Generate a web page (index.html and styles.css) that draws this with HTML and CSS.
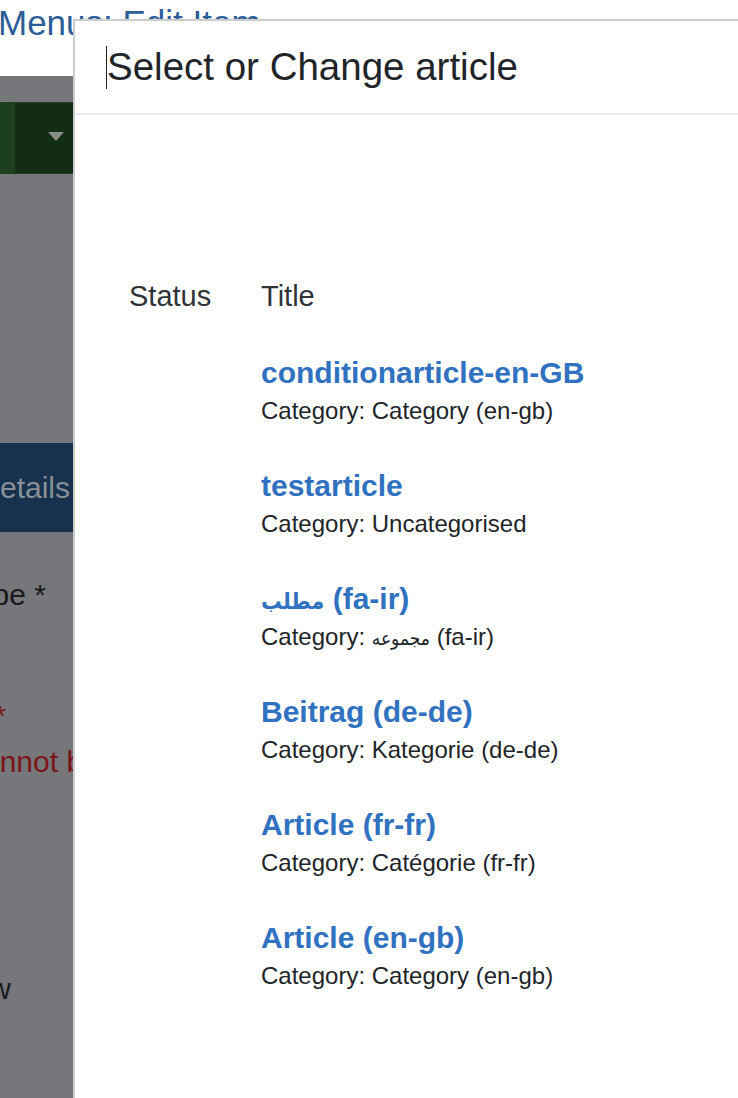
FILE: index.html
```html
<!DOCTYPE html>
<html lang="en">
<head>
<meta charset="utf-8">
<title>Menus: Edit Item</title>
<link rel="stylesheet" href="styles.css">
</head>
<body>
<div class="page">
  <header class="topbar">
    <h1 class="page-title">Menus: Edit Item</h1>
  </header>
  <main class="backdrop">
    <div class="toolbar">
      <div class="toolbar-drop"><span class="caret"></span></div>
    </div>
    <div class="tabbar">
      <div class="tab-wrap"><span class="tab-label">Details</span></div>
    </div>
    <div class="field-line type-label"><span>Menu Item Type *</span></div>
    <div class="field-line req-mark"><span>Title *</span></div>
    <div class="field-line error-text">cannot be empty</div>
    <div class="field-line show-label"><span>Show</span></div>
  </main>
</div>

<div class="modal">
  <div class="modal-header">
    <h3 class="modal-title"><span class="text-caret"></span>Select or Change article</h3>
  </div>
  <div class="modal-body">
    <div class="list-head">
      <div class="col-status">Status</div>
      <div class="col-title">Title</div>
    </div>
    <div class="list-items">
      <div class="item">
        <div class="col-status"></div>
        <div class="col-title">
          <a class="item-title">conditionarticle-en-GB</a>
          <div class="item-cat">Category: Category (en-gb)</div>
        </div>
      </div>
      <div class="item">
        <div class="col-status"></div>
        <div class="col-title">
          <a class="item-title">testarticle</a>
          <div class="item-cat">Category: Uncategorised</div>
        </div>
      </div>
      <div class="item">
        <div class="col-status"></div>
        <div class="col-title">
          <a class="item-title"><span class="ar ar-title">مطلب</span> (fa-ir)</a>
          <div class="item-cat">Category: <span class="ar ar-cat">مجموعه</span> (fa-ir)</div>
        </div>
      </div>
      <div class="item">
        <div class="col-status"></div>
        <div class="col-title">
          <a class="item-title">Beitrag (de-de)</a>
          <div class="item-cat">Category: Kategorie (de-de)</div>
        </div>
      </div>
      <div class="item">
        <div class="col-status"></div>
        <div class="col-title">
          <a class="item-title">Article (fr-fr)</a>
          <div class="item-cat">Category: Catégorie (fr-fr)</div>
        </div>
      </div>
      <div class="item">
        <div class="col-status"></div>
        <div class="col-title">
          <a class="item-title">Article (en-gb)</a>
          <div class="item-cat">Category: Category (en-gb)</div>
        </div>
      </div>
    </div>
  </div>
</div>
</body>
</html>
```

FILE: styles.css
```css
html, body {
  margin: 0;
  padding: 0;
  height: 100%;
  overflow: hidden;
}

body {
  font-family: "Liberation Sans", "DejaVu Sans", Arial, sans-serif;
  background: #76777b;
  position: relative;
}

.page {
  display: flex;
  flex-direction: column;
  height: 1098px;
}

.topbar {
  height: 76px;
  background: #ffffff;
  padding-top: 3px;
  box-sizing: border-box;
}

.page-title {
  margin: 0 0 0 -2px;
  font-size: 35px;
  line-height: 40px;
  font-weight: normal;
  color: #2c5d97;
  white-space: nowrap;
}

.backdrop {
  flex: 1;
  background: #76777b;
  display: flex;
  flex-direction: column;
}

.toolbar {
  margin-top: 26px;
  height: 72px;
  background: #1c3f1d;
  display: flex;
  padding: 1px 0 1px 15px;
  box-sizing: border-box;
}

.toolbar-drop {
  flex: 1;
  background: #122d13;
  display: flex;
  align-items: flex-start;
}

.caret {
  margin: 29px 0 0 33px;
  width: 0;
  height: 0;
  border-left: 8.5px solid transparent;
  border-right: 8.5px solid transparent;
  border-top: 9px solid #8b8b8b;
}

.tabbar {
  margin-top: 269px;
  height: 89px;
  background: #17324f;
  display: flex;
  align-items: center;
}

.tab-wrap {
  width: 70px;
  display: flex;
  justify-content: flex-end;
  white-space: nowrap;
}

.tab-label {
  font-size: 30px;
  line-height: 36px;
  color: #8a9098;
}

.field-line {
  font-size: 30px;
  line-height: 36px;
  white-space: nowrap;
  display: flex;
  justify-content: flex-end;
}

.type-label {
  width: 46px;
  margin-top: 45px;
  color: #1a1a1b;
}

.req-mark {
  width: 6px;
  margin-top: 85px;
  color: #7c1517;
}

.error-text {
  justify-content: flex-start;
  margin-top: 10px;
  margin-left: -32px;
  color: #7c1517;
}

.show-label {
  width: 11px;
  margin-top: 191px;
  color: #1a1a1b;
}

/* Modal */
.modal {
  position: absolute;
  top: 19px;
  left: 73px;
  width: 760px;
  height: 1200px;
  background: #ffffff;
  border: 2px solid rgba(0, 0, 0, 0.2);
  box-sizing: border-box;
}

.modal-header {
  padding: 23px 31px;
  border-bottom: 2px solid #e9ecf0;
}

.modal-title {
  margin: 0;
  display: flex;
  align-items: center;
  font-size: 38.5px;
  line-height: 46px;
  font-weight: normal;
  color: #212529;
  white-space: nowrap;
}

.text-caret {
  width: 1px;
  height: 43px;
  background: #222222;
}

.modal-body {
  padding: 163px 0 0 54px;
}

.list-head {
  display: grid;
  grid-template-columns: 132px 1fr;
  font-size: 29px;
  line-height: 36px;
  color: #2e3338;
}

.list-items {
  margin-top: 41px;
  display: flex;
  flex-direction: column;
  gap: 39px;
}

.item {
  display: grid;
  grid-template-columns: 132px 1fr;
}

.item-title {
  display: block;
  height: 36px;
  font-size: 30px;
  line-height: 36px;
  font-weight: bold;
  color: #3072bf;
  text-decoration: none;
  white-space: nowrap;
}

.item-cat {
  margin-top: 2px;
  height: 36px;
  font-size: 24px;
  line-height: 36px;
  color: #212529;
  white-space: nowrap;
}

.ar {
  font-family: "DejaVu Sans Condensed", "DejaVu Sans", sans-serif;
  line-height: 10px;
}

.ar-title {
  font-size: 23px;
}

.ar-cat {
  font-size: 19px;
}
```
